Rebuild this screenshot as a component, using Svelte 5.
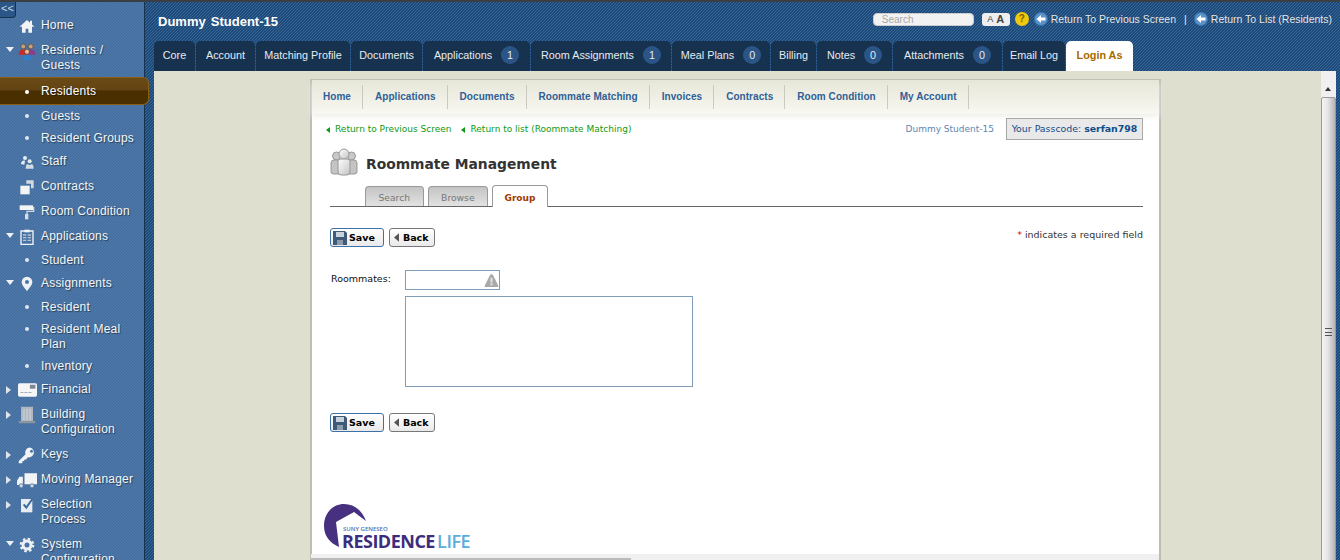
<script>
  const icons = {
    home: '<path fill="#f2f4f6" d="M12 3 1 13h3.500v9H10v-6h4v6h5.500v-9H23l-3.500-3.200V4h-3v3z"/>',
    people:
      '<circle cx="7" cy="6" r="3.200" fill="#c9a27a" stroke="#5a3a20" stroke-width=".8"/><path fill="#c92b2b" d="M1 17c0-5 2-7 6-7s5 2 5 7z"/><circle cx="17" cy="6" r="3.200" fill="#c9a27a" stroke="#5a3a20" stroke-width=".8"/><path fill="#8e3a8e" d="M12 17c0-5 1-7 5-7s6 2 6 7z"/><circle cx="12" cy="13" r="3.200" fill="#e2c09a" stroke="#5a3a20" stroke-width=".8"/><path fill="#2f7fc8" d="M6.500 24c0-4 1.500-7 5.500-7s5.500 3 5.500 7z"/>',
    staff:
      '<circle cx="9" cy="6" r="3" fill="#e8ecf0"/><path fill="#e8ecf0" d="M3 15c0-4 3-6 6-5l-1 6z"/><circle cx="16" cy="11" r="3" fill="#e8ecf0"/><path fill="#d5dbe2" d="M10 22c0-5 2-7 3-7l3 2 3-2c1 0 3 2 3 7z"/>',
    contracts:
      '<path fill="#f2f4f6" d="M2 10h14v13H2z"/><path fill="#d3d9e0" d="M11 2h11v12h-4V7h-7z"/>',
    roller:
      '<path fill="#f2f4f6" d="M1 2h20v7H1z"/><path fill="#cfd6dd" d="M21 4h2v8H13v3h-2v-5h10z"/><path fill="#d8dde3" d="M9 15h5v8H9z"/>',
    clipboard:
      '<path fill="none" stroke="#f2f4f6" stroke-width="2" d="M3 3h18v20H3z"/><path fill="#f2f4f6" d="M8 1h8v4H8z"/><path fill="#b6c6d8" d="M6 8h5v2H6zm0 4h5v2H6zm0 4h5v2H6zm7-8h5v2h-5zm0 4h5v2h-5zm0 4h5v2h-5z"/>',
    pin: '<path fill="#eef1f4" fill-rule="evenodd" d="M12 1a8 8 0 0 0-8 8c0 5 5 9 8 14 3-5 8-9 8-14a8 8 0 0 0-8-8zm0 5a3 3 0 1 1 0 6 3 3 0 0 1 0-6z"/>',
    card: '<rect x="0" y="4" width="24" height="17" rx="2" fill="#f4f6f8"/><path fill="#7d8894" d="M15 6h7v5h-7z"/><path fill="#8d98a4" d="M3 15h4v1H3zm5 0h4v1H8zm5 0h4v1h-4z"/>',
    building:
      '<path fill="#aeb6bf" d="M4 1h16v20H4z"/><path fill="#8b949e" d="M1 20h22v3H1z"/><path fill="#c5ccd3" d="M7 4h2v15H7zm4 0h2v15h-2zm4 0h2v15h-2z"/>',
    key: '<path fill="#f2f4f6" fill-rule="evenodd" d="M16 2a6.500 6.500 0 0 0-6 9L1 20v3h4l1-1v-2h2l1-2h2l2-3a6.500 6.500 0 1 0 3-13zm2 3a2 2 0 1 1 0 4 2 2 0 0 1 0-4z"/>',
    truck:
      '<path fill="#f2f4f6" d="M9 4h15v13H9zM7 8v10H0v-5l3-5z"/><circle cx="5" cy="19" r="2.500" fill="#d3d9e0" stroke="#4a72a3"/><circle cx="18" cy="19" r="2.500" fill="#d3d9e0" stroke="#4a72a3"/>',
    check:
      '<path fill="#e8ecf0" d="M3 3h17v20H3z"/><path fill="none" stroke="#3d6a9e" stroke-width="3" d="m7 11 4 5 9-13"/>',
    gear: '<circle cx="12" cy="12" r="8.500" fill="none" stroke="#eef1f4" stroke-width="5" stroke-dasharray="3.400 3.270"/><circle cx="12" cy="12" r="6" fill="none" stroke="#eef1f4" stroke-width="4.500"/>'
  }

  const nav = [
    { label: 'Home', icon: 'home' },
    { label: 'Residents / Guests', icon: 'people', arrow: 'down', size: 18 },
    { label: 'Residents', sub: true, active: true },
    { label: 'Guests', sub: true },
    { label: 'Resident Groups', sub: true },
    { label: 'Staff', icon: 'staff' },
    { label: 'Contracts', icon: 'contracts' },
    { label: 'Room Condition', icon: 'roller' },
    { label: 'Applications', icon: 'clipboard', arrow: 'down' },
    { label: 'Student', sub: true },
    { label: 'Assignments', icon: 'pin', arrow: 'down' },
    { label: 'Resident', sub: true },
    { label: 'Resident Meal Plan', sub: true },
    { label: 'Inventory', sub: true },
    { label: 'Financial', icon: 'card', arrow: 'right', size: 19 },
    { label: 'Building Configuration', icon: 'building', arrow: 'right', size: 18 },
    { label: 'Keys', icon: 'key', arrow: 'right', size: 18 },
    { label: 'Moving Manager', icon: 'truck', arrow: 'right', size: 20 },
    { label: 'Selection Process', icon: 'check', arrow: 'right' },
    { label: 'System Configuration', icon: 'gear', arrow: 'down' }
  ]

  const tabs = [
    { label: 'Core', width: 41 },
    { label: 'Account', width: 59 },
    { label: 'Matching Profile', width: 94 },
    { label: 'Documents', width: 71 },
    { label: 'Applications', count: 1, width: 107 },
    { label: 'Room Assignments', count: 1, width: 140 },
    { label: 'Meal Plans', count: 0, width: 98 },
    { label: 'Billing', width: 45 },
    { label: 'Notes', count: 0, width: 75 },
    { label: 'Attachments', count: 0, width: 109 },
    { label: 'Email Log', width: 62 }
  ]

  const links = [
    'Home',
    'Applications',
    'Documents',
    'Roommate Matching',
    'Invoices',
    'Contracts',
    'Room Condition',
    'My Account'
  ]
</script>

{#snippet actions()}
  <div class="actions">
    <button class="btn primary">
      <svg viewBox="0 0 14 14" width="14" height="14">
        <path fill="#3f5a78" d="M0 0h12l2 2v12H0z" />
        <path fill="#c9d3dd" d="M3 1h8v5H3z" />
        <path fill="#8d9bab" d="M4 9h6v5H4z" />
      </svg>
      Save
    </button>
    <button class="btn plain">
      <svg viewBox="0 0 6 10" width="5" height="9"><path fill="#555" d="M6 0v10L0 5z" /></svg>
      Back
    </button>
  </div>
{/snippet}

{#snippet backIcon()}
  <svg class="back" viewBox="0 0 14 14" width="14" height="14">
    <circle cx="7" cy="7" r="7" fill="#3c78b4" />
    <circle cx="7" cy="7" r="6" fill="#5a93c8" />
    <path fill="#fff" d="M2.500 7 7 3v2.500h4.500v3H7V11z" />
  </svg>
{/snippet}

<div class="app">
  <aside>
    <button class="collapse">&lt;&lt;</button>
    <ul>
      {#each nav as item}
        <li class:sub={item.sub} class:active={item.active}>
          <span class="arrow">
            {#if item.arrow}<i class={item.arrow}></i>{/if}
          </span>
          <span class="ico">
            {#if item.icon}
              <svg viewBox="0 0 24 24" width={item.size ?? 16} height={item.size ?? 16}>{@html icons[item.icon]}</svg>
            {:else}
              <b class="dot"></b>
            {/if}
          </span>
          <span class="label">{item.label}</span>
        </li>
      {/each}
    </ul>
  </aside>

  <div class="main">
    <header>
      <div class="top">
        <h1>Dummy Student-15</h1>
        <div class="tools">
          <span class="search">Search</span>
          <span class="sizes"><small>A</small><b>A</b></span>
          <span class="help">?</span>
          {@render backIcon()}
          <span class="ret">Return To Previous Screen</span>
          <span class="pipe">|</span>
          {@render backIcon()}
          <span class="ret">Return To List (Residents)</span>
        </div>
      </div>
      <nav class="tabs">
        {#each tabs as tab}
          <span class="tab" style="width: {tab.width}px">
            {tab.label}
            {#if tab.count !== undefined}<em>{tab.count}</em>{/if}
          </span>
        {/each}
        <span class="tab login">Login As</span>
      </nav>
    </header>

    <div class="body">
      <div class="canvas">
        <section class="panel">
          <div class="subnav">
            {#each links as link}
              <span>{link}</span>
            {/each}
          </div>

          <div class="content">
            <div class="crumbs">
              <span class="crumb">Return to Previous Screen</span>
              <span class="crumb">Return to list (Roommate Matching)</span>
              <span class="who">Dummy Student-15</span>
              <span class="passcode">Your Passcode: <b>serfan798</b></span>
            </div>

            <div class="heading">
              <svg viewBox="0 0 28 28" width="28" height="28">
                <defs>
                  <linearGradient id="body" x1="0" y1="0" x2="1" y2="1">
                    <stop offset="0" stop-color="#fff" />
                    <stop offset="1" stop-color="#c4c4c4" />
                  </linearGradient>
                </defs>
                <circle cx="6.500" cy="8" r="4" fill="#c8c8c8" stroke="#999" />
                <circle cx="21.500" cy="8" r="4" fill="#c8c8c8" stroke="#999" />
                <path fill="#c4c4c4" stroke="#999" d="M1 24V15q0-3 3-3h20q3 0 3 3v9q0 2-3 2H4q-3 0-3-2z" />
                <circle cx="14" cy="6" r="5" fill="url(#body)" stroke="#999" />
                <path fill="url(#body)" stroke="#999" d="M8 13q0-2 3-2h6q3 0 3 2v10q0 4-3 4h-6q-3 0-3-4z" />
              </svg>
              <h2>Roommate Management</h2>
            </div>

            <div class="subtabs">
              <span>Search</span>
              <span>Browse</span>
              <span class="current">Group</span>
            </div>

            <div class="bar">
              {@render actions()}
              <p class="req"><i>*</i> indicates a required field</p>
            </div>

            <div class="field">
              <span class="name">Roommates:</span>
              <div class="inputs">
                <div class="lookup">
                  <svg viewBox="0 0 16 16" width="15" height="15">
                    <path fill="#a9a9a9" d="M8 1q1 0 2 2l5 10q1 2-1 2H2q-2 0-1-2L6 3q1-2 2-2z" />
                    <path fill="#e6e6e6" d="M7 5h2v5H7zm0 6h2v2H7z" />
                  </svg>
                </div>
                <div class="listbox"></div>
              </div>
            </div>

            {@render actions()}
          </div>

          <div class="logo">
            <svg viewBox="0 0 44 46" width="44" height="46">
              <path fill="#46307f" d="M42 17C38 6 30 0 20 0 8 0 0 10 0 22c0 10 6 17 15 21l-3-25L30 8z" />
            </svg>
            <span class="suny">SUNY GENESEO</span>
            <span class="res">RESIDENCE <span>LIFE</span></span>
          </div>

          <div class="foot"><div></div></div>
        </section>
      </div>

      <div class="scrollbar">
        <i class="up"></i>
        <div class="thumb"><span></span></div>
      </div>
    </div>
  </div>
</div>

<style>
  :global(body) {
    margin: 0;
  }

  .app {
    width: 1340px;
    height: 560px;
    box-sizing: border-box;
    display: flex;
    overflow: hidden;
    position: relative;
    border-top: 2px solid #3a3f45;
    font-family: "Liberation Sans", Arial, sans-serif;
    background: linear-gradient(135deg, #1f4a78 25%, #34689c 25%, #34689c 50%, #1f4a78 50%, #1f4a78 75%, #34689c 75%) 0 0 / 3px 3px;
  }

  aside {
    width: 144px;
    flex: none;
    position: relative;
    z-index: 2;
    border-right: 1px solid #17324f;
    background: linear-gradient(135deg, #46709f 25%, #4f79ac 25%, #4f79ac 50%, #46709f 50%, #46709f 75%, #4f79ac 75%) 0 0 / 3px 3px;
  }

  .collapse {
    position: absolute;
    left: 0;
    top: 0;
    width: 16px;
    height: 16px;
    padding: 0 0 3px;
    border: 1px solid #17324f;
    border-width: 0 1px 1px 0;
    border-radius: 0 0 4px 0;
    background: #2a5688;
    color: #cfd8e2;
    font: 11px/12px "Liberation Sans", sans-serif;
  }

  ul {
    list-style: none;
    margin: 0;
    padding: 11px 0 0;
  }

  li {
    display: flex;
    padding: 5px 0;
    color: #f4f6f8;
    font-size: 12px;
    line-height: 15px;
    letter-spacing: 0.2px;
    text-shadow: 1px 1px 1px rgba(0, 0, 0, 0.45);
  }

  li.sub {
    padding: 3.5px 0;
  }

  li.active {
    margin-right: -5px;
    margin-top: -1px;
    box-sizing: border-box;
    height: 28px;
    padding: 6px 0;
    border: 1px solid #8a5f12;
    border-left: none;
    border-radius: 0 6px 6px 0;
    background: linear-gradient(#6a4a14 0, #634414 45%, #4a3000 50%, #4a3000 100%);
    color: #fff;
  }

  .arrow {
    width: 16px;
    flex: none;
    display: flex;
    justify-content: center;
    padding-top: 4px;
    box-sizing: border-box;
    height: 15px;
  }

  .arrow i {
    display: block;
    width: 0;
    height: 0;
  }

  .arrow .down {
    margin-left: 3px;
    border: 4px solid transparent;
    border-top: 5px solid #eef1f4;
    border-bottom: none;
  }

  .arrow .right {
    margin-left: 1px;
    border: 4px solid transparent;
    border-left: 5px solid #dfe5eb;
    border-right: none;
  }

  .ico {
    width: 25px;
    flex: none;
    height: 15px;
    display: flex;
    align-items: center;
    justify-content: center;
  }

  .ico svg {
    margin-left: -3px;
    flex: none;
  }

  .dot {
    width: 4px;
    height: 4px;
    border-radius: 50%;
    background: #dfe6ee;
    margin-left: -3px;
  }

  .active .dot {
    background: #fff;
  }

  .label {
    min-width: 0;
    padding-right: 6px;
  }

  .main {
    flex: 1;
    min-width: 0;
    display: flex;
    flex-direction: column;
    padding-left: 9px;
  }

  header {
    height: 69px;
    flex: none;
    display: flex;
    flex-direction: column;
    justify-content: flex-end;
  }

  .top {
    flex: 1;
    display: flex;
    justify-content: space-between;
    align-items: flex-start;
    padding: 11px 8px 0 4px;
  }

  h1 {
    margin: 0;
    color: #fff;
    font-size: 13px;
    line-height: 17px;
    word-spacing: 1.5px;
  }

  .tools {
    display: flex;
    align-items: center;
    gap: 5px;
    margin-top: -1px;
    color: #e6ebf1;
    font-size: 10.5px;
  }

  .search {
    width: 101px;
    height: 13px;
    box-sizing: border-box;
    margin-right: 3px;
    padding: 0 8px;
    border-radius: 4px;
    background: #f2f2f2;
    border: 1px solid #ccc;
    color: #a8a8a8;
    font-size: 10px;
    line-height: 11px;
  }

  .sizes {
    display: flex;
    width: 28px;
    height: 13px;
    box-sizing: border-box;
    border-radius: 3px;
    background: #eee;
    color: #444;
    font-size: 9px;
    line-height: 13px;
    justify-content: center;
    gap: 3px;
  }

  .sizes b {
    font-size: 11px;
  }

  .sizes small {
    font-size: 9px;
  }

  .help {
    width: 14px;
    height: 14px;
    border-radius: 50%;
    background: #f0c80c;
    color: #7a6000;
    font-size: 10px;
    font-weight: bold;
    line-height: 14px;
    text-align: center;
  }

  .back {
    flex: none;
  }

  .ret {
    margin-left: -2px;
    white-space: nowrap;
    text-shadow: 0 0 1px rgba(0, 0, 0, 0.4);
  }

  .pipe {
    margin: 0 2px 0 3px;
  }

  .tabs {
    display: flex;
    gap: 1px;
    height: 30px;
  }

  .tab {
    display: flex;
    align-items: center;
    justify-content: center;
    gap: 9px;
    padding: 0 0 2px;
    box-sizing: border-box;
    border-radius: 5px 5px 0 0;
    background: #17324f;
    color: #e6ebf1;
    font-size: 10.8px;
    white-space: nowrap;
  }

  .tab em {
    width: 18px;
    height: 18px;
    border-radius: 50%;
    background: #2b5587;
    font-style: normal;
    line-height: 18px;
    text-align: center;
  }

  .tab.login {
    width: 67px;
    background: #fff;
    color: #a36a00;
    font-weight: bold;
  }

  .body {
    flex: 1;
    min-height: 0;
    display: flex;
    padding-right: 4px;
  }

  .canvas {
    flex: 1;
    min-width: 0;
    background: #dedfcf;
    padding: 8px 0 0 156px;
  }

  .panel {
    width: 851px;
    height: 481px;
    box-sizing: border-box;
    display: flex;
    flex-direction: column;
    background: #fff;
    border: 1px solid #bdbdb5;
    border-width: 1px 2px 0;
    font-family: "DejaVu Sans", Verdana, sans-serif;
  }

  .subnav {
    height: 34px;
    flex: none;
    display: flex;
    align-items: center;
    background: linear-gradient(#e6e6d8, #f8f8f2);
    box-shadow: 0 3px 5px #f0f0ea;
  }

  .subnav span {
    padding: 0 11px 0 12px;
    border-right: 1px solid #c9c9bd;
    color: #2f5f96;
    font: bold 10px/24px "Liberation Sans", sans-serif;
    letter-spacing: 0.05px;
  }

  .subnav span:first-child {
    padding-left: 11px;
  }

  .content {
    padding: 0 16px 0 18px;
  }

  .crumbs {
    display: flex;
    align-items: center;
    height: 22px;
    margin: 4px 0 0 -4px;
    font-size: 9px;
  }

  .crumb {
    position: relative;
    padding-left: 9px;
    margin-right: 10px;
    color: #0f9a14;
    white-space: nowrap;
  }

  .crumb::before {
    content: "";
    position: absolute;
    left: 0;
    top: 3px;
    border: 3px solid transparent;
    border-right: 4px solid #0f9a14;
    border-left: none;
  }

  .who {
    margin-left: auto;
    margin-right: 12px;
    color: #5c86b4;
  }

  .passcode {
    box-sizing: border-box;
    height: 22px;
    width: 137px;
    border: 1px solid #a8a8a8;
    background: #e9e9e9;
    color: #0f4c8a;
    font-size: 9.4px;
    line-height: 20px;
    text-align: center;
    white-space: nowrap;
  }

  .heading {
    display: flex;
    align-items: center;
    gap: 8px;
    height: 28px;
    margin-top: 10px;
  }

  .heading svg {
    margin-top: -4px;
  }

  h2 {
    margin: 0;
    color: #333;
    font-size: 13.85px;
    font-weight: bold;
  }

  .subtabs {
    display: flex;
    align-items: flex-end;
    gap: 4px;
    height: 21px;
    margin-top: 7px;
    padding-left: 35px;
    border-bottom: 1px solid #666;
  }

  .subtabs span {
    height: 20px;
    box-sizing: border-box;
    padding: 0 12.5px;
    border: 1px solid #999;
    border-bottom: none;
    border-radius: 4px 4px 0 0;
    background: linear-gradient(#c4c4c4, #e2e2e2);
    color: #777;
    font-size: 9.2px;
    line-height: 21px;
  }

  .subtabs .current {
    height: 22px;
    margin-bottom: -1px;
    padding: 0 11.5px;
    background: #fff;
    color: #a33a00;
    font-size: 9px;
    font-weight: bold;
    line-height: 24px;
  }

  .bar {
    display: flex;
    justify-content: space-between;
    margin-top: 21px;
  }

  .actions {
    display: flex;
    gap: 5px;
  }

  .btn {
    display: flex;
    align-items: center;
    gap: 2px;
    height: 19px;
    padding: 0 8px 0 1px;
    border: 1px solid #777;
    border-radius: 3px;
    background: linear-gradient(#fff, #e9e9e9);
    color: #000;
    font: bold 9.5px "DejaVu Sans", sans-serif;
  }

  .btn svg {
    margin-left: 1px;
  }

  .btn.primary {
    border-color: #3c70a8;
  }

  .btn.plain {
    gap: 4px;
    padding: 0 5px 0 3px;
  }

  .req {
    margin: 1px 0 0;
    color: #333;
    font-size: 9.5px;
    line-height: 12px;
  }

  .req i {
    color: #e00000;
    font-style: normal;
  }

  .field {
    display: flex;
    margin: 23px 0 26px 1px;
    gap: 13px;
  }

  .name {
    width: 61px;
    margin-top: 3px;
    color: #111;
    font-size: 9.5px;
    line-height: 12px;
    font-weight: 500;
  }

  .lookup {
    width: 95px;
    height: 20px;
    box-sizing: border-box;
    display: flex;
    justify-content: flex-end;
    align-items: center;
    border: 1px solid #7f9db9;
  }

  .listbox {
    width: 288px;
    height: 91px;
    box-sizing: border-box;
    margin-top: 6px;
    border: 1px solid #7f9db9;
  }

  .logo {
    position: relative;
    margin: auto 0 4px 12px;
    height: 46px;
    flex: none;
  }

  .suny {
    position: absolute;
    left: 19px;
    top: 22px;
    color: #4a6fb5;
    font: 600 6px/6px "Open Sans", sans-serif;
  }

  .res {
    position: absolute;
    left: 18px;
    top: 30px;
    color: #3c2d7d;
    font: bold 18px/14px "Open Sans", sans-serif;
    letter-spacing: -0.5px;
    word-spacing: -2px;
    white-space: nowrap;
  }

  .res span {
    color: #5aaedb;
    font-weight: 600;
  }

  .foot {
    height: 6px;
    flex: none;
    margin-left: -1px;
    background: #f0f0f0;
    display: flex;
    align-items: flex-end;
  }

  .foot div {
    width: 320px;
    height: 2px;
    background: #bbb;
  }

  .scrollbar {
    width: 15px;
    flex: none;
    position: relative;
    background: #f0f0f0;
    padding-top: 26px;
    box-sizing: border-box;
  }

  .up {
    position: absolute;
    top: 16px;
    left: 4px;
    border: 3px solid transparent;
    border-bottom: 4px solid #333;
    border-top: none;
  }

  .thumb {
    height: 470px;
    box-sizing: border-box;
    display: flex;
    align-items: center;
    justify-content: center;
    border: 1px solid #9a9a9a;
    border-radius: 2px;
    background: linear-gradient(90deg, #f4f4f4, #e8e8e8 40%, #b4b4b4);
  }

  .thumb span {
    width: 7px;
    height: 6px;
    border-top: 1px solid #555;
    border-bottom: 1px solid #555;
    background: linear-gradient(#555, #555) center / 100% 1px no-repeat;
  }
</style>
